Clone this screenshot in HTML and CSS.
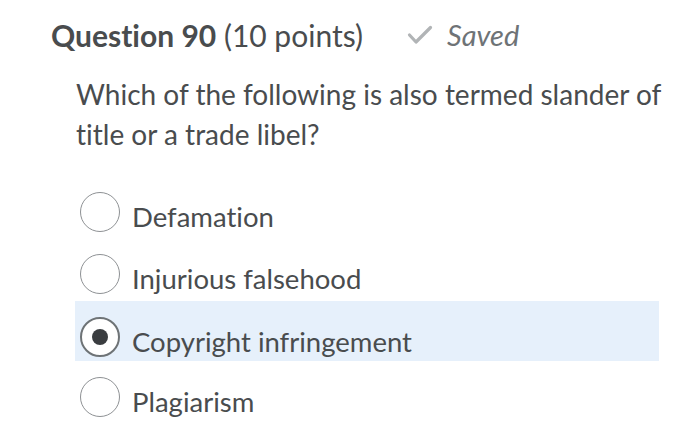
FILE: index.html
```html
<!DOCTYPE html>
<html lang="en">
<head>
  <meta charset="UTF-8">
  <title>Question 90</title>
  <link rel="stylesheet" href="styles.css">
</head>
<body>
  <div class="question">
    <div class="question-header">
      <h2 class="question-title"><strong>Question 90</strong> (10 points)</h2>
      <span class="saved">
        <svg class="check" width="26" height="20" viewBox="0 0 26 20">
          <path d="M2.5 10 L9 17 L23.5 2.5" fill="none" stroke="#b1b4b6" stroke-width="3.2" stroke-linecap="round" stroke-linejoin="round"/>
        </svg>
        Saved
      </span>
    </div>

    <p class="question-text">Which of the following is also termed slander of title or a trade libel?</p>

    <div class="options">
      <label class="option"><span class="radio"></span><span class="label">Defamation</span></label>
      <label class="option"><span class="radio"></span><span class="label">Injurious falsehood</span></label>
      <label class="option selected"><span class="radio checked"></span><span class="label">Copyright infringement</span></label>
      <label class="option last"><span class="radio"></span><span class="label">Plagiarism</span></label>
    </div>
  </div>
</body>
</html>
```

FILE: styles.css
```css
/* Base */
* {
  margin: 0;
  padding: 0;
  box-sizing: border-box;
}

body {
  font-family: Lato, "Open Sans", sans-serif;
  font-variant-ligatures: none;
  background-color: #fff;
  color: #494c4e;
}

.question {
  padding: 15px 0 0 51px;
}

/* Header */
.question-header {
  display: flex;
  align-items: center;
  gap: 44px;
}

.question-title {
  font-size: 30px;
  font-weight: 400;
  line-height: 40px;
}

.question-title strong {
  font-weight: 700;
}

.saved {
  display: flex;
  align-items: center;
  gap: 14px;
  font-style: italic;
  font-size: 29px;
  line-height: 40px;
  color: #6e7376;
}

/* Question body */
.question-text {
  font-size: 28px;
  line-height: 40px;
  width: 600px;
  margin: 19px 0 0 25px;
}

.options {
  margin-top: 27px;
  margin-left: 24px;
  width: 584px;
  display: flex;
  flex-direction: column;
}

.option {
  display: flex;
  align-items: center;
  gap: 12px;
  height: 62px;
  padding-left: 5px;
  font-size: 27.5px;
}

.option .label {
  padding-top: 9px;
}

.option.selected {
  background-color: #e6f0fb;
  height: 60px;
  margin-top: -4px;
  padding-top: 12px;
}

.option.last {
  margin-top: 5px;
}

.radio {
  flex-shrink: 0;
  width: 40px;
  height: 40px;
  border: 1.5px solid #8e9194;
  border-radius: 50%;
  background-color: #fff;
  display: flex;
  align-items: center;
  justify-content: center;
}

.radio.checked {
  border: 2px solid #6e7376;
}

.radio.checked::after {
  content: '';
  width: 16px;
  height: 16px;
  border-radius: 50%;
  background-color: #3a3d40;
}
```
